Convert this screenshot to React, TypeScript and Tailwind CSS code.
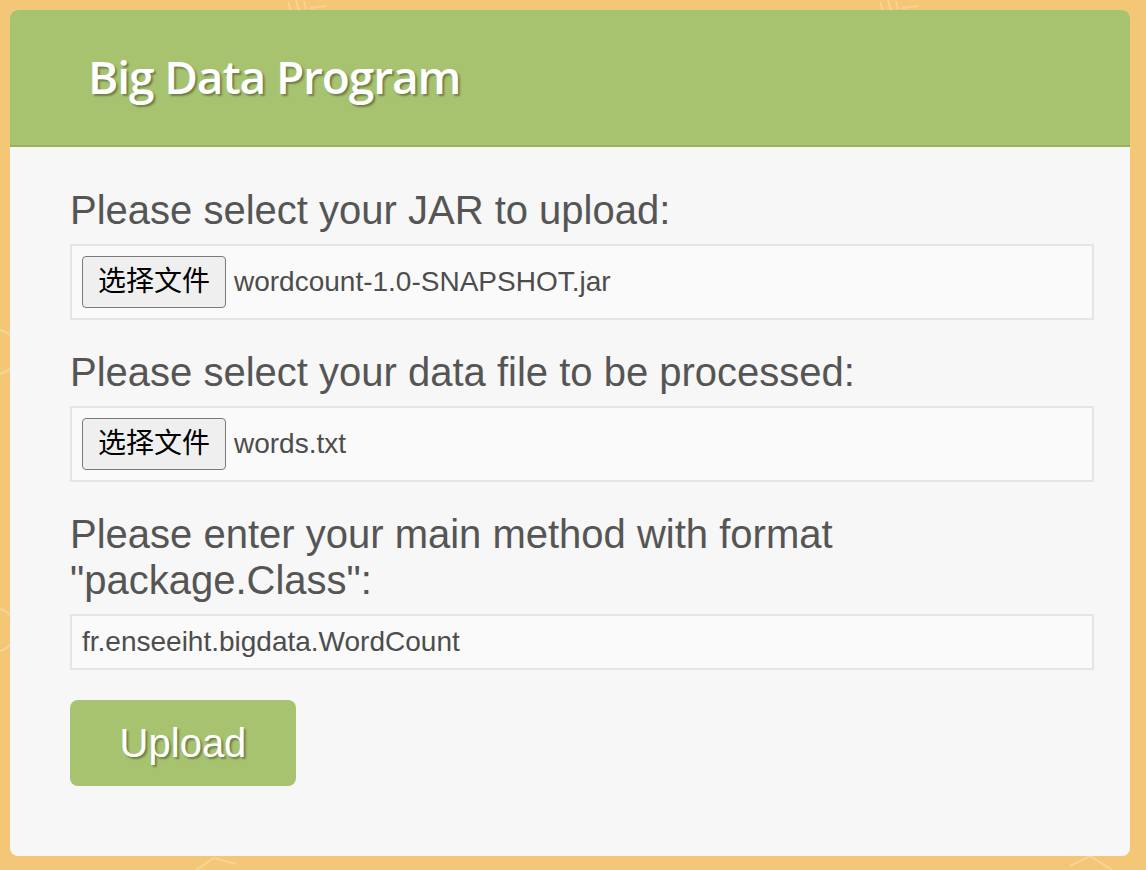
import React from "react";

const sans = { fontFamily: '"Liberation Sans", Arial, "Noto Sans CJK SC", sans-serif' };

function FileField({ name }: { name: string }) {
  return (
    <div className="flex items-center border-2 border-[#e5e5e5] bg-[#fafafa] p-[10px]">
      <span
        className="flex h-[52px] w-[144px] items-center justify-center rounded-[4px] border border-[#7a7a7a] bg-[#efefef] text-[28px] text-black"
        style={{ fontFamily: '"Liberation Sans", "Noto Sans CJK SC", sans-serif' }}
      >
        选择文件
      </span>
      <span className="ml-[8px] text-[28px] text-[#4d4d4d]">{name}</span>
    </div>
  );
}

export default function App() {
  return (
    <div className="relative min-h-[870px] overflow-hidden bg-[#f3c775] p-[10px] pr-[16px]" style={sans}>
      <svg className="pointer-events-none absolute inset-0" width="1146" height="870" fill="none" stroke="#ffffff" strokeOpacity="0.25" strokeWidth="2">
        <path d="M288 2 l4 12 M296 0 l3 10 M304 1 l2 8 M310 8 l16 -2" />
        <path d="M880 2 l4 12 M888 0 l3 10 M896 1 l2 8 M902 8 l16 -2" />
        <circle cx="-4" cy="352" r="22" />
        <circle cx="-6" cy="630" r="22" />
        <path d="M1070 866 l20 -10 l22 14" />
        <path d="M196 870 l18 -12 l22 6" />
      </svg>
      <div className="relative flex h-[846px] flex-col overflow-hidden rounded-[8px] bg-[#f7f7f7]">
        <div className="flex h-[137px] items-center border-b-2 border-[#97b25d] bg-[#a7c36f] pb-[2px] pl-[78px]">
          <h1
            className="text-[46px] font-semibold text-white"
            style={{ fontFamily: '"Open Sans", sans-serif', textShadow: "2px 2px 2px rgba(0,0,0,0.35)", letterSpacing: "-1.1px" }}
          >
            Big Data Program
          </h1>
        </div>
        <div className="flex flex-col pl-[60px] pr-[36px] pt-[40px]">
          <label className="mb-[11px] text-[40px] leading-[46px] text-[#555555]">Please select your JAR to upload:</label>
          <FileField name="wordcount-1.0-SNAPSHOT.jar" />
          <label className="mb-[11px] mt-[29px] text-[40px] leading-[46px] text-[#555555]">
            Please select your data file to be processed:
          </label>
          <FileField name="words.txt" />
          <label className="mb-[11px] mt-[29px] text-[40px] leading-[46px] text-[#555555]">
            Please enter your main method with format "package.Class":
          </label>
          <div className="border-2 border-[#e5e5e5] bg-[#fafafa] px-[10px] py-[10px] text-[28px] leading-[32px] text-[#4d4d4d]">
            fr.enseeiht.bigdata.WordCount
          </div>
          <div className="mt-[30px]">
            <button
              className="h-[86px] w-[226px] rounded-[8px] bg-[#a7c36f] text-[40px] text-white"
              style={{ textShadow: "2px 2px 2px rgba(0,0,0,0.35)" }}
            >
              Upload
            </button>
          </div>
        </div>
      </div>
    </div>
  );
}
